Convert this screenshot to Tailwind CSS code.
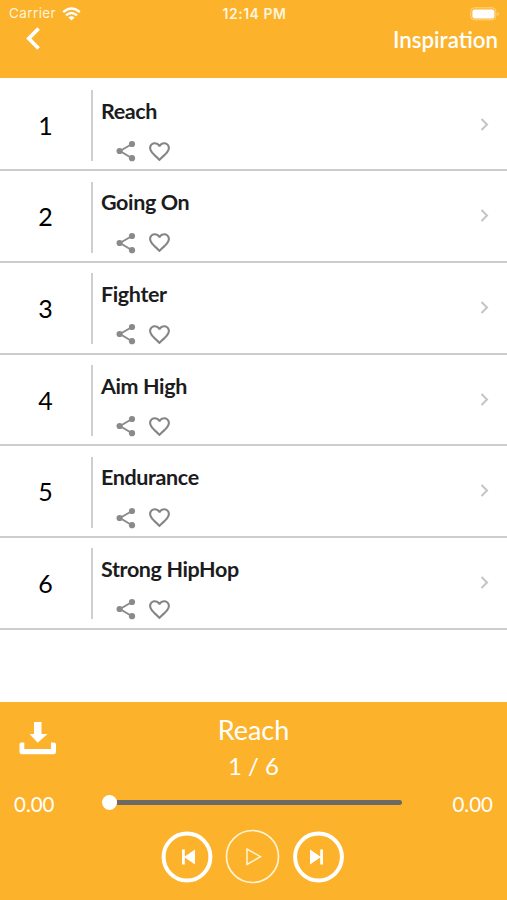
<!DOCTYPE html>
<html lang="en">
<head>
<meta charset="utf-8">
<title>Inspiration</title>
<script src="https://cdn.jsdelivr.net/npm/@tailwindcss/browser@4"></script>
</head>
<body class="w-[507px] h-[900px] overflow-hidden bg-white font-['Lato',sans-serif] flex flex-col">
<header class="h-[78px] shrink-0 bg-[#fcb22b] text-white">
  <div class="h-[26px] grid grid-cols-3 items-center pl-[9px] pr-[7px] font-['Inter',sans-serif] text-[13px] leading-[27px] text-[#fff5dc]">
    <div class="flex items-center gap-[6px]"><span class="tracking-[0.4px] text-[13.5px]">Carrier</span>
      <svg class="w-[19px] h-[14px]" viewBox="0 0 19 14" fill="none" stroke="#fff" stroke-width="2.4"><path d="M1.2 5.2Q9.5-2 17.8 5.2M4 8.3q5.5-4.7 11 0"/><path d="M9.5 13.6L6.4 10.5q3.1-2.4 6.2 0z" fill="#fff" stroke="none"/></svg>
    </div>
    <div class="text-center font-semibold text-[14px] tracking-[0.5px] whitespace-nowrap">12:14 PM</div>
    <svg class="justify-self-end w-[30px] h-[14px]" viewBox="0 0 30 14"><rect x=".8" y=".8" width="25" height="12" rx="3.5" fill="none" stroke="#fdd58a" stroke-width="1"/><rect x="2.4" y="2.4" width="22" height="9" rx="2" fill="#fff"/><path d="M27.5 5v4q3-2 0-4" fill="#fdd58a"/></svg>
  </div>
  <div class="flex justify-between pl-[26px] pr-[9px]">
    <svg class="w-[15px] h-[25px]" viewBox="0 0 15 25" fill="none" stroke="#fff" stroke-width="3.8"><path d="M12.6 2.5L2.8 12.5l9.8 10"/></svg>
    <h1 class="text-[22.3px] leading-[28px] font-semibold">Inspiration</h1>
  </div>
</header>
<main id="tracks" class="h-[624px] shrink-0 pt-[1.6px]"></main>
<footer class="h-[198px] shrink-0 bg-[#fcb22b] text-white">
  <div class="grid grid-cols-[75px_357px_75px] h-[85px]">
    <svg class="ml-[19px] mt-[20px] w-[38px] h-[33px]" viewBox="0 0 38 33" fill="#fff"><path d="M15 0h7.500v12h6L18.700 20.700 10.500 12H15zM2.500 20.500H5.300V27H32V20.500h2.800q2.200 0 2.200 2V30q0 2.300-2.300 2.300H2.600Q.5 32.300.5 30V22.500q0-2 2-2z"/></svg>
    <div class="text-center pt-[11px]">
      <div class="text-[27px] leading-[34px]">Reach</div>
      <div class="text-[24px] leading-[38px]">1 / 6</div>
    </div>
  </div>
  <div class="flex items-center h-[35px] px-[14px] text-[20.500px]">
    <span class="w-[88px]">0.00</span>
    <div class="flex items-center w-[300px] h-[16px] -mt-[4px]"><i class="w-[15px] h-[15px] rounded-full bg-white"></i><i class="h-[5px] w-[285px] bg-[#6d6965] rounded-r-full"></i></div>
    <span class="ml-auto">0.00</span>
  </div>
  <div class="flex items-center justify-center gap-[12px] pt-[7px] pr-[2px]">
    <svg class="w-[52px] h-[54px]" viewBox="0 0 52 54"><circle cx="26" cy="27" r="23.400" fill="none" stroke="#fff" stroke-width="4"/><path d="M21 19.500h2.800v7L34 19.500v15l-10.200-7v7H21z" fill="#fff"/></svg>
    <svg class="w-[55px] h-[55px]" viewBox="0 0 55 55" fill="none" stroke="#fff3d4" stroke-width="1.700"><circle cx="27.500" cy="27.500" r="26"/><path d="M22 20v15.500L35.500 27.700z" stroke-width="1.500"/></svg>
    <svg class="w-[52px] h-[54px]" viewBox="0 0 52 54"><circle cx="26.500" cy="27" r="23.400" fill="none" stroke="#fff" stroke-width="4"/><path d="M31 19.500h-2.800v7L18 19.500v15l10.200-7v7H31z" fill="#fff"/></svg>
  </div>
</footer>
<script>
document.getElementById('tracks').innerHTML = ['Reach','Going On','Fighter','Aim High','Endurance','Strong HipHop'].map((t,i)=>`
<div class="flex h-[91.66px] border-b-2 border-[#cdcdcd] text-[#1c1c1e]">
  <div class="w-[91px] text-center text-[25px] leading-[91px] text-black">${i+1}</div>
  <div class="w-[2px] h-[71px] mt-[10.400px] bg-[#cfcfcf]"></div>
  <div class="pl-[8px] pt-[17px]">
    <div class="text-[21.500px] leading-[29px] font-bold tracking-[-0.38px] [font-variant-ligatures:none] whitespace-nowrap">${t}</div>
    <div class="flex items-center gap-[10px] pl-[14px] pt-[13px]">
      <svg class="w-[22px] h-[22px] shrink-0" viewBox="0 0 22 22" fill="#8a8a8a"><path d="M17 4L5 11l12 7.200" fill="none" stroke="#8a8a8a" stroke-width="1.900"/><circle cx="17" cy="4" r="3.100"/><circle cx="4.600" cy="11" r="3.100"/><circle cx="17" cy="18.200" r="3.100"/></svg>
      <svg class="w-[25px] h-[25px] shrink-0" viewBox="0 0 24 24" fill="#858585"><path d="M16.500 3c-1.740 0-3.410.81-4.500 2.090C10.910 3.810 9.240 3 7.500 3 4.420 3 2 5.420 2 8.500c0 3.780 3.400 6.860 8.550 11.540L12 21.350l1.450-1.320C18.600 15.360 22 12.280 22 8.500 22 5.420 19.580 3 16.500 3zm-4.400 15.550l-.1.100-.1-.100C7.140 14.240 4 11.390 4 8.500 4 6.500 5.500 5 7.500 5c1.540 0 3.040.99 3.570 2.360h1.870C13.460 5.990 14.960 5 16.500 5c2 0 3.500 1.500 3.500 3.500 0 2.890-3.140 5.740-7.900 10.050z"/></svg>
    </div>
  </div>
  <svg class="ml-auto mr-[18px] mt-[38px] w-[9px] h-[13px]" viewBox="0 0 9 13" fill="none" stroke="#c4c4c6" stroke-width="2"><path d="M1.500 1l5.500 5.500L1.500 12"/></svg>
</div>`).join('');
</script>
</body>
</html>
